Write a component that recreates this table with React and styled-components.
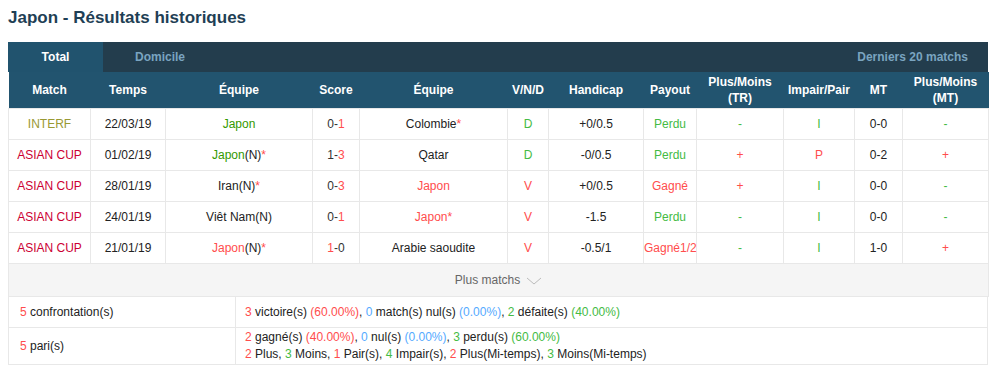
import React from 'react';
import styled, { createGlobalStyle } from 'styled-components';

const GlobalStyle = createGlobalStyle`
  body {
    margin: 0;
    background: #fff;
    font-family: "Liberation Sans", Arial, sans-serif;
    font-size: 12px;
    color: #222;
  }
`;

const C = {
  red: '#ff4d4d',
  crimson: '#cc0033',
  olive: '#999933',
  dgreen: '#339900',
  green: '#44bb44',
  blue: '#55aaff',
};

const rows = [
  { league: 'INTERF', lc: C.olive, date: '22/03/19', home: 'Japon', hc: C.dgreen, hstar: false, s1: '0', s2: '1', s1c: '#333', s2c: C.red, away: 'Colombie', ac: '#222', astar: true, vnd: 'D', vc: C.green, hcap: '+0/0.5', pay: 'Perdu', pc: C.green, tr: '-', trc: C.green, ip: 'I', ipc: C.green, mt: '0-0', pm: '-', pmc: C.green },
  { league: 'ASIAN CUP', lc: C.crimson, date: '01/02/19', home: 'Japon', hn: true, hc: C.dgreen, hstar: true, s1: '1', s2: '3', s1c: '#333', s2c: C.red, away: 'Qatar', ac: '#222', vnd: 'D', vc: C.green, hcap: '-0/0.5', pay: 'Perdu', pc: C.green, tr: '+', trc: C.red, ip: 'P', ipc: C.red, mt: '0-2', pm: '+', pmc: C.red },
  { league: 'ASIAN CUP', lc: C.crimson, date: '28/01/19', home: 'Iran', hn: true, hc: '#222', hstar: true, s1: '0', s2: '3', s1c: '#333', s2c: C.red, away: 'Japon', ac: C.red, vnd: 'V', vc: C.red, hcap: '+0/0.5', pay: 'Gagné', pc: C.red, tr: '+', trc: C.red, ip: 'I', ipc: C.green, mt: '0-0', pm: '-', pmc: C.green },
  { league: 'ASIAN CUP', lc: C.crimson, date: '24/01/19', home: 'Viêt Nam', hn: true, hc: '#222', s1: '0', s2: '1', s1c: '#333', s2c: C.red, away: 'Japon', ac: C.red, astar: true, vnd: 'V', vc: C.red, hcap: '-1.5', pay: 'Perdu', pc: C.green, tr: '-', trc: C.green, ip: 'I', ipc: C.green, mt: '0-0', pm: '-', pmc: C.green },
  { league: 'ASIAN CUP', lc: C.crimson, date: '21/01/19', home: 'Japon', hn: true, hc: C.red, hstar: true, s1: '1', s2: '0', s1c: C.red, s2c: '#333', away: 'Arabie saoudite', ac: '#222', vnd: 'V', vc: C.red, hcap: '-0.5/1', pay: 'Gagné1/2', pc: C.red, tr: '-', trc: C.green, ip: 'I', ipc: C.green, mt: '1-0', pm: '+', pmc: C.red },
];

const widths = [82, 75, 147, 47, 148, 41, 95, 53, 87, 71, 48, 86];
const heads = ['Match', 'Temps', 'Équipe', 'Score', 'Équipe', 'V/N/D', 'Handicap', 'Payout', 'Plus/Moins\n(TR)', 'Impair/Pair', 'MT', 'Plus/Moins\n(MT)'];

const App = () => {
  return (
    <Page>
      <GlobalStyle />
      <Title>Japon - Résultats historiques</Title>
      <Box>
        <TabBar>
          <Tab active>Total</Tab>
          <Tab>Domicile</Tab>
          <Last>Derniers 20 matchs</Last>
        </TabBar>
        <Table>
          <colgroup>
            {widths.map((w, i) => <col key={i} style={{ width: w }} />)}
          </colgroup>
          <thead>
            <tr>
              {heads.map((h, i) => <Th key={i}>{h}</Th>)}
            </tr>
          </thead>
          <tbody>
            {rows.map((r, i) => (
              <tr key={i}>
                <Td color={r.lc}>{r.league}</Td>
                <Td>{r.date}</Td>
                <Td color={r.hc}>{r.home}{r.hn && <Neutral>(N)</Neutral>}{r.hstar && <Star>*</Star>}</Td>
                <Td><Sp color={r.s1c}>{r.s1}</Sp><Sp color="#333">-</Sp><Sp color={r.s2c}>{r.s2}</Sp></Td>
                <Td color={r.ac}>{r.away}{r.astar && <Star>*</Star>}</Td>
                <Td color={r.vc}>{r.vnd}</Td>
                <Td>{r.hcap}</Td>
                <Td color={r.pc}>{r.pay}</Td>
                <Td color={r.trc}>{r.tr}</Td>
                <Td color={r.ipc}>{r.ip}</Td>
                <Td>{r.mt}</Td>
                <Td color={r.pmc}>{r.pm}</Td>
              </tr>
            ))}
            <tr>
              <More colSpan={12}>
                Plus matchs
                <svg width="16" height="10" viewBox="0 0 16 10">
                  <path d="M1 2 L8 8 L15 2" fill="none" stroke="#bbb" strokeWidth="1" />
                </svg>
              </More>
            </tr>
          </tbody>
        </Table>
        <Summary>
          <colgroup>
            <col style={{ width: 227 }} />
            <col />
          </colgroup>
          <tbody>
            <tr>
              <SLabel><Sp color={C.red}>5</Sp> confrontation(s)</SLabel>
              <SText>
                <Sp color={C.red}>3</Sp> victoire(s) <Sp color={C.red}>(60.00%)</Sp>, <Sp color={C.blue}>0</Sp> match(s) nul(s) <Sp color={C.blue}>(0.00%)</Sp>, <Sp color={C.green}>2</Sp> défaite(s) <Sp color={C.green}>(40.00%)</Sp>
              </SText>
            </tr>
            <tr>
              <SLabel><Sp color={C.red}>5</Sp> pari(s)</SLabel>
              <SText tall>
                <div><Sp color={C.red}>2</Sp> gagné(s) <Sp color={C.red}>(40.00%)</Sp>, <Sp color={C.blue}>0</Sp> nul(s) <Sp color={C.blue}>(0.00%)</Sp>, <Sp color={C.green}>3</Sp> perdu(s) <Sp color={C.green}>(60.00%)</Sp></div>
                <div><Sp color={C.red}>2</Sp> Plus, <Sp color={C.green}>3</Sp> Moins, <Sp color={C.red}>1</Sp> Pair(s), <Sp color={C.green}>4</Sp> Impair(s), <Sp color={C.red}>2</Sp> Plus(Mi-temps), <Sp color={C.green}>3</Sp> Moins(Mi-temps)</div>
              </SText>
            </tr>
          </tbody>
        </Summary>
      </Box>
    </Page>
  );
};

const Page = styled.div`
  padding: 8px 8px 0 8px;
  width: 980px;
`;

const Title = styled.h2`
  margin: 0;
  height: 34px;
  line-height: 20px;
  font-size: 17px;
  font-weight: bold;
  color: #1f3f55;
`;

const Box = styled.div`
  width: 980px;
`;

const TabBar = styled.div`
  display: flex;
  align-items: stretch;
  height: 30px;
  background: #233d4d;
`;

const Tab = styled.div`
  width: ${p => (p.active ? '95px' : 'auto')};
  padding: ${p => (p.active ? '0' : '0 0 0 32px')};
  display: flex;
  align-items: center;
  justify-content: center;
  background: ${p => (p.active ? '#21536e' : 'transparent')};
  color: ${p => (p.active ? '#fff' : '#7aa4c0')};
  font-weight: bold;
  font-size: 12px;
`;

const Last = styled.div`
  margin-left: auto;
  padding-right: 20px;
  display: flex;
  align-items: center;
  color: #7aa4c0;
  font-weight: bold;
`;

const Table = styled.table`
  width: 980px;
  border-collapse: collapse;
  table-layout: fixed;
`;

const Th = styled.th`
  height: 36px;
  padding: 0;
  background: #22546f;
  color: #fff;
  font-weight: bold;
  font-size: 12px;
  line-height: 16px;
  white-space: pre-line;
  text-align: center;
`;

const Td = styled.td`
  height: 30px;
  padding: 0;
  text-align: center;
  color: ${p => p.color || '#222'};
  border: 1px solid #e8e8e8;
  white-space: nowrap;
`;

const Sp = styled.span`
  color: ${p => p.color};
`;

const Neutral = styled.span`
  color: #222;
`;

const Star = styled.span`
  color: ${C.red};
`;

const More = styled.td`
  height: 32px;
  padding: 0;
  text-align: center;
  background: #f5f5f5;
  color: #666;
  border: 1px solid #e8e8e8;

  svg {
    margin-left: 6px;
    vertical-align: middle;
  }
`;

const Summary = styled.table`
  width: 980px;
  border-collapse: collapse;
  table-layout: fixed;
`;

const SLabel = styled.td`
  padding: 0 0 0 11px;
  border: 1px solid #e8e8e8;
  border-top: none;
  color: #222;
`;

const SText = styled.td`
  height: ${p => (p.tall ? '36px' : '30px')};
  padding: 0 0 0 9px;
  border: 1px solid #e8e8e8;
  border-top: none;
  line-height: 17px;
  color: #222;
`;

export default App;
